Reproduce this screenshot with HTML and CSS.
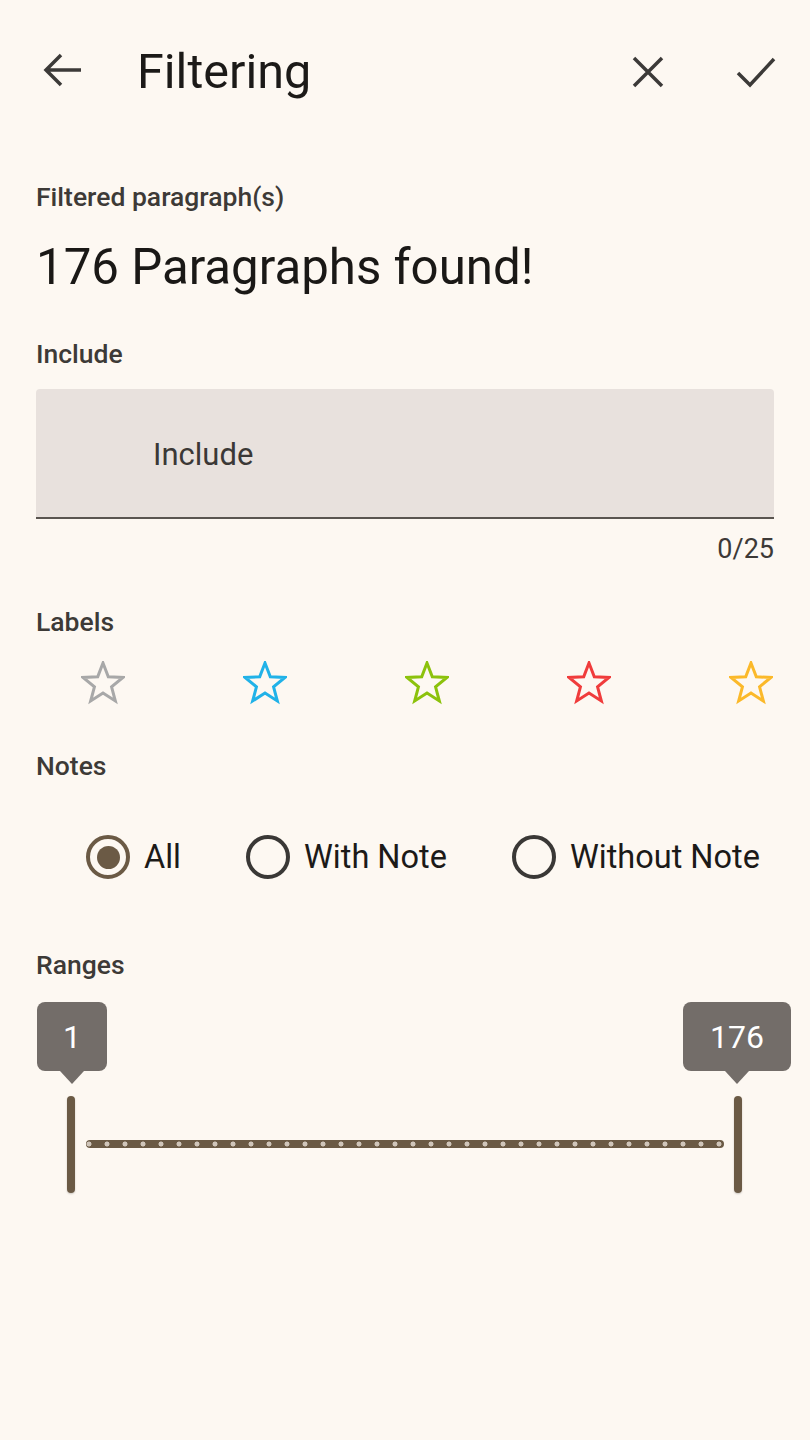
FILE: index.html
```html
<!DOCTYPE html>
<html lang="en">
<head>
<meta charset="utf-8">
<title>Filtering</title>
<link rel="stylesheet" href="styles.css">
</head>
<body>
<div class="app">
  <header class="topbar">
    <svg class="ic-back" width="40" height="40" viewBox="0 0 40 40"><path d="M4 18 H39 M19 3 L4 18 L19 33" fill="none" stroke="#3c3a38" stroke-width="3.5" stroke-linejoin="miter"/></svg>
    <h1 class="title">Filtering</h1>
    <div class="spacer"></div>
    <svg class="ic-close" width="32" height="32" viewBox="0 0 32 32"><path d="M2 2 L30 30 M30 2 L2 30" fill="none" stroke="#3c3a38" stroke-width="3.5"/></svg>
    <svg class="ic-check" width="40" height="32" viewBox="0 0 40 32"><path d="M2 17 L14 29 L38 3" fill="none" stroke="#3c3a38" stroke-width="3.5"/></svg>
  </header>

  <main class="content">
    <div class="label first">Filtered paragraph(s)</div>
    <div class="found">176 Paragraphs found!</div>

    <div class="label include-label">Include</div>
    <div class="field">
      <span class="placeholder">Include</span>
    </div>
    <div class="counter">0/25</div>

    <div class="label labels-label">Labels</div>
    <div class="stars">
      <svg class="star" width="44" height="44" viewBox="0 0 44 44"><polygon points="22,2 27.29,15.72 41.97,16.51 30.56,25.78 34.34,39.99 22,32 9.66,39.99 13.44,25.78 2.03,16.51 16.71,15.72" fill="none" stroke="#a8a8a8" stroke-width="3"/></svg>
      <svg class="star" width="44" height="44" viewBox="0 0 44 44"><polygon points="22,2 27.29,15.72 41.97,16.51 30.56,25.78 34.34,39.99 22,32 9.66,39.99 13.44,25.78 2.03,16.51 16.71,15.72" fill="none" stroke="#21b2e8" stroke-width="3"/></svg>
      <svg class="star" width="44" height="44" viewBox="0 0 44 44"><polygon points="22,2 27.29,15.72 41.97,16.51 30.56,25.78 34.34,39.99 22,32 9.66,39.99 13.44,25.78 2.03,16.51 16.71,15.72" fill="none" stroke="#8cc20c" stroke-width="3"/></svg>
      <svg class="star" width="44" height="44" viewBox="0 0 44 44"><polygon points="22,2 27.29,15.72 41.97,16.51 30.56,25.78 34.34,39.99 22,32 9.66,39.99 13.44,25.78 2.03,16.51 16.71,15.72" fill="none" stroke="#f03c3c" stroke-width="3"/></svg>
      <svg class="star" width="44" height="44" viewBox="0 0 44 44"><polygon points="22,2 27.29,15.72 41.97,16.51 30.56,25.78 34.34,39.99 22,32 9.66,39.99 13.44,25.78 2.03,16.51 16.71,15.72" fill="none" stroke="#fbb92a" stroke-width="3"/></svg>
    </div>

    <div class="label notes-label">Notes</div>
    <div class="radios">
      <div class="radio-item"><span class="radio checked"><span class="dot"></span></span><span class="radio-text">All</span></div>
      <div class="radio-item"><span class="radio"></span><span class="radio-text">With Note</span></div>
      <div class="radio-item"><span class="radio"></span><span class="radio-text">Without Note</span></div>
    </div>

    <div class="label ranges-label">Ranges</div>
    <div class="slider">
      <div class="tip tip-left">1</div>
      <div class="tip tip-right">176</div>
      <div class="track"></div>
      <div class="thumb thumb-left"></div>
      <div class="thumb thumb-right"></div>
    </div>
  </main>
</div>
</body>
</html>
```

FILE: styles.css
```css
* { box-sizing: border-box; }
html, body { margin: 0; padding: 0; }
body {
  background: #fdf8f2;
  font-family: Roboto, "Noto Sans", "Liberation Sans", sans-serif;
  color: #1c1a18;
  width: 810px;
  height: 1440px;
  overflow: hidden;
}
.topbar {
  height: 142px;
  display: flex;
  align-items: center;
  padding-top: 2px;
}
.ic-back { margin-left: 42px; flex: none; }
.title {
  margin: 0 0 0 55px;
  font-size: 48.5px;
  font-weight: 400;
  line-height: 56px;
  color: #1c1a18;
}
.spacer { flex: 1; }
.ic-close { flex: none; margin-right: 72px; }
.ic-check { flex: none; margin-right: 34px; }

.content { padding: 0 36px; }
.label {
  font-size: 26.5px;
  line-height: 30px;
  font-weight: 500;
  color: #3d3a37;
}
.label.first { margin-top: 40px; }
.found {
  margin-top: 27px;
  font-size: 49.2px;
  line-height: 56px;
  color: #1a1816;
}
.include-label { margin-top: 44px; }
.field {
  margin-top: 20px;
  height: 130px;
  background: #e8e1dd;
  border-bottom: 2px solid #5a5550;
  border-radius: 4px 4px 0 0;
  display: flex;
  align-items: center;
  padding-left: 117px;
}
.placeholder {
  font-size: 31px;
  color: #3b3836;
  margin-top: 2px;
}
.counter {
  margin-top: 15px;
  text-align: right;
  font-size: 27px;
  line-height: 30px;
  color: #3d3a37;
}
.labels-label { margin-top: 43px; }
.stars {
  margin-top: 24px;
  display: flex;
  justify-content: space-between;
  padding: 0 1px 0 45px;
}
.star { display: block; }
.notes-label { margin-top: 46px; }
.radios {
  margin-top: 52px;
  height: 48px;
  display: flex;
  align-items: center;
  gap: 65px;
  padding-left: 50px;
}
.radio-item { display: flex; align-items: center; gap: 14px; }
.radio {
  width: 44px;
  height: 44px;
  border-radius: 50%;
  border: 4px solid #3a3836;
  display: flex;
  align-items: center;
  justify-content: center;
}
.radio.checked { border-color: #6b5a45; }
.radio .dot {
  width: 23px;
  height: 23px;
  border-radius: 50%;
  background: #6b5a45;
}
.radio-text {
  font-size: 32.5px;
  line-height: 40px;
  color: #1c1a18;
}
.ranges-label { margin-top: 69px; }
.slider {
  position: relative;
  margin-top: 22px;
  height: 200px;
}
.tip {
  position: absolute;
  top: 0;
  height: 69px;
  background: #736d69;
  color: #fff;
  border-radius: 8px;
  font-size: 32px;
  display: flex;
  align-items: center;
  justify-content: center;
}
.tip::after {
  content: "";
  position: absolute;
  left: 50%;
  bottom: -13px;
  margin-left: -12px;
  border-left: 12px solid transparent;
  border-right: 12px solid transparent;
  border-top: 13px solid #736d69;
}
.tip-left { left: 1px; width: 70px; }
.tip-right { left: 647px; width: 108px; }
.track {
  position: absolute;
  left: 50px;
  top: 138px;
  width: 638px;
  height: 8px;
  border-radius: 4px;
  background: radial-gradient(circle, #cfc5ba 2.2px, transparent 2.8px) -6px 0 / 18px 8px repeat-x, #6b5a45;
}
.thumb {
  position: absolute;
  top: 94px;
  width: 8px;
  height: 97px;
  border-radius: 4px;
  background: #6b5a45;
  box-shadow: 0 1px 2px rgba(0,0,0,0.2);
}
.thumb-left { left: 31px; }
.thumb-right { left: 698px; }
```
